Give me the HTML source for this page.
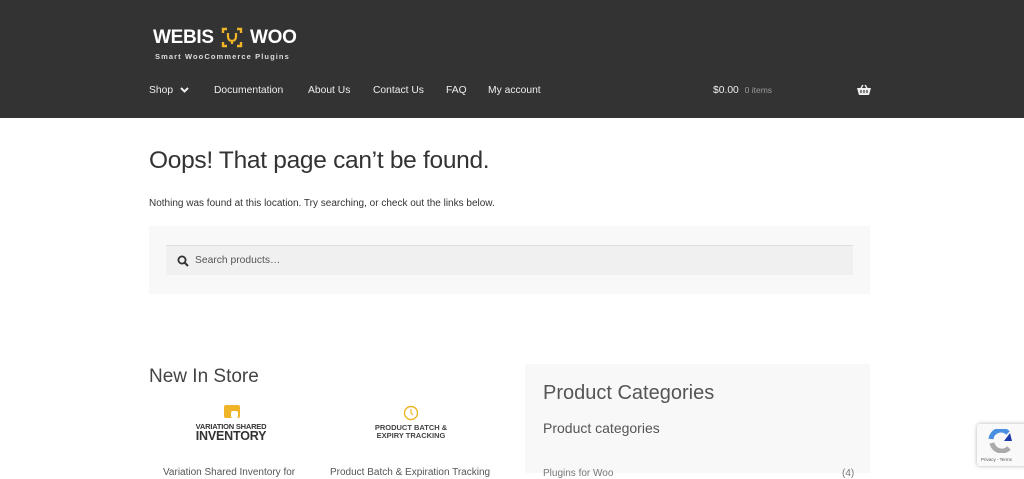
<!DOCTYPE html>
<html><head><meta charset="utf-8">
<style>
*{margin:0;padding:0;box-sizing:border-box}
html,body{width:1024px;height:473px;overflow:hidden;background:#fff;font-family:"Liberation Sans",sans-serif;color:#404040}
.hdr{position:absolute;left:0;top:0;width:1024px;height:118px;background:#333}
.logo{position:absolute;top:27px;color:#fff;font-weight:bold;font-size:19px;letter-spacing:-0.3px}
.tag{position:absolute;left:155px;top:52px;color:#ddd;font-weight:bold;font-size:7.5px;letter-spacing:1.1px}
.nav{position:absolute;top:85px;font-size:10.3px;color:#eee}
.page{position:absolute}
</style></head><body>
<div class="hdr">
  <div class="logo" style="left:153px">WEBIS</div>
  <svg style="position:absolute;left:221px;top:27px" width="22" height="21" viewBox="0 0 22 21">
    <g fill="none" stroke="#f0b429" stroke-width="2.4">
      <path d="M2 6V2h4M16 2h4v4M20 15v4h-4M6 19H2v-4"/>
    </g>
    <path d="M7 6v4a4 4 0 0 0 8 0V6M11 14v3" stroke="#f0b429" stroke-width="2.2" fill="none"/>
  </svg>
  <div class="logo" style="left:250px">WOO</div>
  <div class="tag">Smart WooCommerce Plugins</div>
  <div class="nav" style="left:149px">Shop</div>
  <svg style="position:absolute;left:180px;top:87px" width="9" height="6" viewBox="0 0 9 6"><path d="M1 1l3.5 3.5L8 1" stroke="#eee" stroke-width="2" fill="none"/></svg>
  <div class="nav" style="left:214px">Documentation</div>
  <div class="nav" style="left:308px">About Us</div>
  <div class="nav" style="left:373px">Contact Us</div>
  <div class="nav" style="left:446px">FAQ</div>
  <div class="nav" style="left:488px">My account</div>
  <div class="nav" style="left:713px;font-size:10.3px">$0.00 <span style="color:#999;font-size:8.5px;margin-left:3px">0 items</span></div>
  <svg style="position:absolute;left:857px;top:84px" width="14" height="12" viewBox="0 0 14 12"><path d="M0 4h14l-2 7H2z" fill="#eee"/><path d="M4 4l2-3M10 4L8 1" stroke="#eee" stroke-width="1.4"/><path d="M4 6v3M7 6v3M10 6v3" stroke="#333" stroke-width="1.2"/></svg>
</div>
<div class="page" style="left:149px;top:147px;font-size:24.5px;color:#333;letter-spacing:-0.3px">Oops! That page can’t be found.</div>
<div class="page" style="left:149px;top:198px;font-size:10px;color:#333">Nothing was found at this location. Try searching, or check out the links below.</div>
<div class="page" style="left:149px;top:226px;width:721px;height:68px;background:#f8f8f8"></div>
<div class="page" style="left:166px;top:245px;width:687px;height:30px;background:#f0f0f0;border-top:1px solid #ddd"></div>
<svg class="page" style="left:177px;top:255px" width="12" height="12" viewBox="0 0 12 12"><circle cx="5" cy="5" r="3.6" stroke="#333" stroke-width="1.8" fill="none"/><path d="M7.5 7.5l3.5 3.5" stroke="#333" stroke-width="2"/></svg>
<div class="page" style="left:195px;top:255px;font-size:10.3px;color:#555">Search products…</div>
<div class="page" style="left:149px;top:366px;font-size:19px;color:#444">New In Store</div>
<div class="page" style="left:525px;top:364px;width:345px;height:109px;background:#f8f8f8"></div>
<div class="page" style="left:543px;top:382px;font-size:20px;color:#555">Product Categories</div>
<div class="page" style="left:543px;top:420px;font-size:14px;color:#555">Product categories</div>
<div class="page" style="left:224px;top:405px;width:16px;height:13px;background:#f0b429;border-radius:2px"></div>
<div class="page" style="left:231px;top:411px;width:7px;height:7px;background:#fff;border-radius:2px"></div>
<div class="page" style="left:180px;top:422px;width:102px;text-align:center;font-weight:bold;color:#333;font-size:7.5px;letter-spacing:-0.2px">VARIATION SHARED</div>
<div class="page" style="left:180px;top:429px;width:102px;text-align:center;font-weight:bold;color:#333;font-size:12.5px;letter-spacing:-0.2px">INVENTORY</div>
<svg class="page" style="left:403px;top:405px" width="16" height="16" viewBox="0 0 16 16"><circle cx="8" cy="8" r="6.5" fill="none" stroke="#f0b429" stroke-width="1.4"/><path d="M8 4v4l2 2" stroke="#f0b429" stroke-width="1.2" fill="none"/></svg>
<div class="page" style="left:360px;top:424px;width:102px;text-align:center;font-weight:bold;color:#444;font-size:7.5px;line-height:8px">PRODUCT BATCH &amp;<br>EXPIRY TRACKING</div>
<div class="page" style="left:163px;top:467px;font-size:10px;color:#555">Variation Shared Inventory for</div>
<div class="page" style="left:330px;top:467px;font-size:10px;color:#555">Product Batch &amp; Expiration Tracking</div>
<div class="page" style="left:543px;top:468px;font-size:10px;color:#777">Plugins for Woo</div>
<div class="page" style="left:842px;top:468px;font-size:10px;color:#777">(4)</div>
<div class="page" style="left:977px;top:424px;width:50px;height:42px;background:#f9f9f9;border-radius:3px;box-shadow:0 0 4px rgba(0,0,0,.3)">
  <svg style="position:absolute;left:11px;top:5px" width="26" height="24" viewBox="0 0 26 24"><path d="M3 10a10 10 0 0 1 17-6" stroke="#4a90e2" stroke-width="5" fill="none"/><path d="M22 4l2 8h-8z" fill="#1c3aa9"/><path d="M4 14a10 10 0 0 0 17 5" stroke="#aaa" stroke-width="5" fill="none"/></svg>
  <div style="position:absolute;left:4px;top:33px;font-size:4.5px;color:#555">Privacy - Terms</div>
</div>
</body></html>
